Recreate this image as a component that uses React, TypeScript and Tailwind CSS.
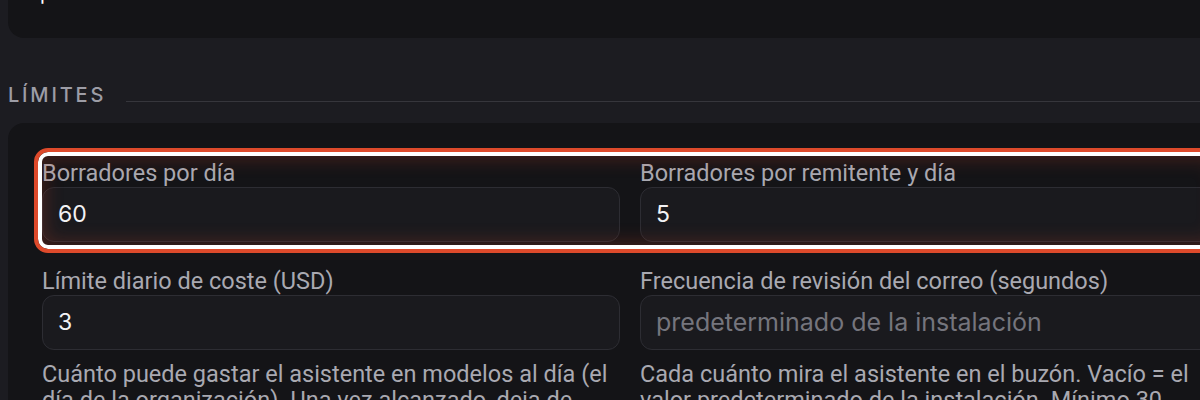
export default function App() {
  return (
    <div className="h-[400px] w-[1200px] overflow-hidden bg-[#1c1c21] font-['Inter',sans-serif]">
      {/* bottom of previous section card */}
      <div className="ml-2 h-[38px] w-[1240px] overflow-hidden rounded-bl-2xl bg-[#141417]">
        <p className="-mt-[19px] pl-[32px] text-[20px] leading-[24px] text-white">p</p>
      </div>

      {/* section heading */}
      <div className="mt-[43px] flex items-center gap-5 pl-2">
        <h2 className="text-[20px] leading-[28px] font-medium tracking-[0.14em] text-[#9d9da6]">LÍMITES</h2>
        <div className="mt-3 h-px flex-1 bg-[#36363c]" />
      </div>

      {/* limits card */}
      <div className="ml-2 mt-[14px] w-[1244px] rounded-2xl bg-[#141417] px-[34px] pt-[37px] pb-10">
        <div className="relative grid grid-cols-2 gap-x-5">
          <div className="pointer-events-none absolute -left-2 -right-2 -top-3 -bottom-[11px] rounded-[14px] border-4 border-[#de4a2b] shadow-[inset_0_0_0_4px_#ffffff,inset_0_0_18px_8px_rgba(222,74,43,0.22)]" />
          <Field label="Borradores por día" value="60" />
          <Field label="Borradores por remitente y día" value="5" />
        </div>

        <div className="mt-[26px] grid grid-cols-2 gap-x-5">
          <Field
            label="Límite diario de coste (USD)"
            value="3"
            help="Cuánto puede gastar el asistente en modelos al día (el día de la organización). Una vez alcanzado, deja de redactar."
          />
          <Field
            label="Frecuencia de revisión del correo (segundos)"
            placeholder="predeterminado de la instalación"
            help="Cada cuánto mira el asistente en el buzón. Vacío = el valor predeterminado de la instalación. Mínimo 30."
          />
        </div>
      </div>
    </div>
  )
}

function Field({
  label,
  value,
  placeholder,
  help,
}: {
  label: string
  value?: string
  placeholder?: string
  help?: string
}) {
  return (
    <div className="flex flex-col">
      <label className="font-['Roboto',sans-serif] text-[23.5px] leading-[26px] text-[#a9a9b1]">{label}</label>
      <div className="mt-px flex h-[55px] items-center rounded-xl border border-[#2d2d33] bg-[#1a1a1e] pl-[15px]">
        {value ? (
          <span className="text-[23px] text-[#f2f2f4]">{value}</span>
        ) : (
          <span className="text-[25px] text-[#75757d]">{placeholder}</span>
        )}
      </div>
      {help && (
        <p className="mt-[11px] font-['Roboto',sans-serif] text-[23.5px] leading-[26px] text-[#a9a9b1]">{help}</p>
      )}
    </div>
  )
}
